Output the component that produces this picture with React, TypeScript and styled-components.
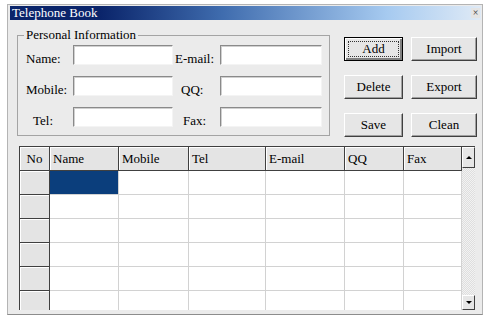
import React from 'react';
import styled, {createGlobalStyle, css} from 'styled-components';

const GlobalStyle = createGlobalStyle`
    body {
        margin: 0;
        background: #fff;
        font-family: "Liberation Serif", "Times New Roman", serif;
        overflow: hidden;
    }
`;

const serif = `"Liberation Serif", "Times New Roman", serif`;

const Window = styled.div`
    margin: 4px 0 0 7px;
    width: 476px;
    height: 311px;
    box-sizing: border-box;
    background: #ebebeb;
    border: 1px solid #b4b4b4;
    border-bottom-color: #8c8c8c;
    padding: 1px 1px 0 2px;
    display: flex;
    flex-direction: column;
    font-family: ${serif};
    color: #000;
`;

const TitleBar = styled.div`
    height: 14px;
    display: flex;
    align-items: center;
    justify-content: space-between;
    padding-left: 2px;
    background: linear-gradient(90deg, #0a246a 0%, #0a246a 19%, #3f6cae 45%, #a6caf0 80%, #dfeaf6 100%);
    color: #fff;
    font-family: ${serif};
    font-size: 13px;
    line-height: 14px;
`;

const CloseBox = styled.div`
    width: 9px;
    height: 10px;
    margin-right: 1px;
    background: #e4e4e4;
    color: #333;
    font-size: 10px;
    line-height: 10px;
    text-align: center;
`;

const TopSection = styled.div`
    display: flex;
    align-items: flex-start;
`;

const Group = styled.fieldset`
    margin: 8px 0 0 7px;
    width: 313px;
    box-sizing: border-box;
    padding: 3px 0 8px 0;
    border: 1px solid #a4a4a4;
    min-inline-size: 0;
    font-family: ${serif};
`;

const GroupTitle = styled.legend`
    margin-left: 6px;
    padding: 0 2px;
    font-family: ${serif};
    font-size: 13px;
    line-height: 14px;
`;

const FormGrid = styled.div`
    display: grid;
    grid-template-columns: 55px 100px 47px 102px;
    grid-auto-rows: 20px;
    row-gap: 11px;
`;

const Label = styled.span<{$indent: number}>`
    font-family: ${serif};
    font-size: 13px;
    line-height: 14px;
    align-self: end;
    margin-bottom: -1px;
    padding-left: ${p => p.$indent}px;
    white-space: nowrap;
`;

const Field = styled.input`
    box-sizing: border-box;
    width: 100%;
    height: 20px;
    margin: 0;
    padding: 0 3px;
    background: #fff;
    border: 1px solid;
    border-color: #8a8a8a #f4f4f4 #f4f4f4 #8a8a8a;
    box-shadow: inset 1px 1px 0 #d0d0d0;
    outline: none;
`;

const ButtonGrid = styled.div`
    display: grid;
    grid-template-columns: 59px 66px;
    grid-auto-rows: 24px;
    column-gap: 8px;
    row-gap: 14px;
    margin: 17px 0 0 14px;
`;

const Button = styled.button<{$focused?: boolean}>`
    box-sizing: border-box;
    margin: 0;
    padding: 0;
    background: #e6e6e6;
    border: 1px solid;
    border-color: #fff #404040 #404040 #fff;
    box-shadow: inset -1px -1px 0 #a0a0a0;
    font-family: ${serif};
    font-size: 13px;
    color: #000;
    position: relative;
    ${p => p.$focused && css`
        border-color: #000;
        box-shadow: inset 1px 1px 0 #fff, inset -2px -2px 0 #808080;
        &::after {
            content: '';
            position: absolute;
            inset: 3px;
            border: 1px dotted #333;
        }
    `}
`;

const Table = styled.div`
    display: flex;
    margin: 9px 0 0 9px;
    width: 456px;
    height: 164px;
    box-sizing: border-box;
    border-left: 1px solid #404040;
    border-top: 1px solid #404040;
    background: #fff;
    overflow: hidden;
`;

const Cells = styled.div`
    display: grid;
    grid-template-columns: 30px 69px 70px 77px 79px 59px 58px;
    grid-auto-rows: 24px;
    align-content: start;
    overflow: hidden;
`;

const HeadCell = styled.div<{$center?: boolean}>`
    box-sizing: border-box;
    background: #e4e4e4;
    border-right: 1px solid #404040;
    border-bottom: 1px solid #404040;
    box-shadow: inset 1px 1px 0 #fff;
    padding-left: ${p => (p.$center ? 0 : 3)}px;
    text-align: ${p => (p.$center ? 'center' : 'left')};
    font-family: ${serif};
    font-size: 13px;
    line-height: 23px;
`;

const Cell = styled.div<{$selected?: boolean}>`
    box-sizing: border-box;
    background: ${p => (p.$selected ? '#0b3e7c' : '#fff')};
    border-right: 1px solid #d2d2d2;
    border-bottom: 1px solid #d2d2d2;
`;

const ScrollBar = styled.div`
    width: 13px;
    display: flex;
    flex-direction: column;
    justify-content: space-between;
    background: repeating-conic-gradient(#f2f2f2 0 25%, #dedede 0 50%) 0 0 / 2px 2px;
`;

const ScrollButton = styled.div<{$height: number; $down?: boolean}>`
    box-sizing: border-box;
    height: ${p => p.$height}px;
    background: #e6e6e6;
    border: 1px solid;
    border-color: #fff #404040 #404040 #fff;
    display: flex;
    align-items: center;
    justify-content: center;
    &::before {
        content: '';
        border-left: 3px solid transparent;
        border-right: 3px solid transparent;
        ${p => (p.$down ? 'border-top: 3px solid #000;' : 'border-bottom: 3px solid #000;')}
    }
`;

const columns = ['Name', 'Mobile', 'Tel', 'E-mail', 'QQ', 'Fax'];

const App: React.FC = () => {
    const rows = [0, 1, 2, 3, 4, 5];
    return (
        <Window>
            <GlobalStyle/>
            <TitleBar>
                <span>Telephone Book</span>
                <CloseBox>×</CloseBox>
            </TitleBar>
            <TopSection>
                <Group>
                    <GroupTitle>Personal Information</GroupTitle>
                    <FormGrid>
                        <Label $indent={8}>Name:</Label>
                        <Field/>
                        <Label $indent={2}>E-mail:</Label>
                        <Field/>
                        <Label $indent={8}>Mobile:</Label>
                        <Field/>
                        <Label $indent={8}>QQ:</Label>
                        <Field/>
                        <Label $indent={15}>Tel:</Label>
                        <Field/>
                        <Label $indent={10}>Fax:</Label>
                        <Field/>
                    </FormGrid>
                </Group>
                <ButtonGrid>
                    <Button $focused>Add</Button>
                    <Button>Import</Button>
                    <Button>Delete</Button>
                    <Button>Export</Button>
                    <Button>Save</Button>
                    <Button>Clean</Button>
                </ButtonGrid>
            </TopSection>
            <Table>
                <Cells>
                    <HeadCell $center>No</HeadCell>
                    {columns.map(c => <HeadCell key={c}>{c}</HeadCell>)}
                    {rows.map(r => (
                        <React.Fragment key={r}>
                            <HeadCell/>
                            {columns.map((c, i) => <Cell key={c} $selected={r === 0 && i === 0}/>)}
                        </React.Fragment>
                    ))}
                </Cells>
                <ScrollBar>
                    <ScrollButton $height={21}/>
                    <ScrollButton $height={15} $down/>
                </ScrollBar>
            </Table>
        </Window>
    );
};

export default App;
